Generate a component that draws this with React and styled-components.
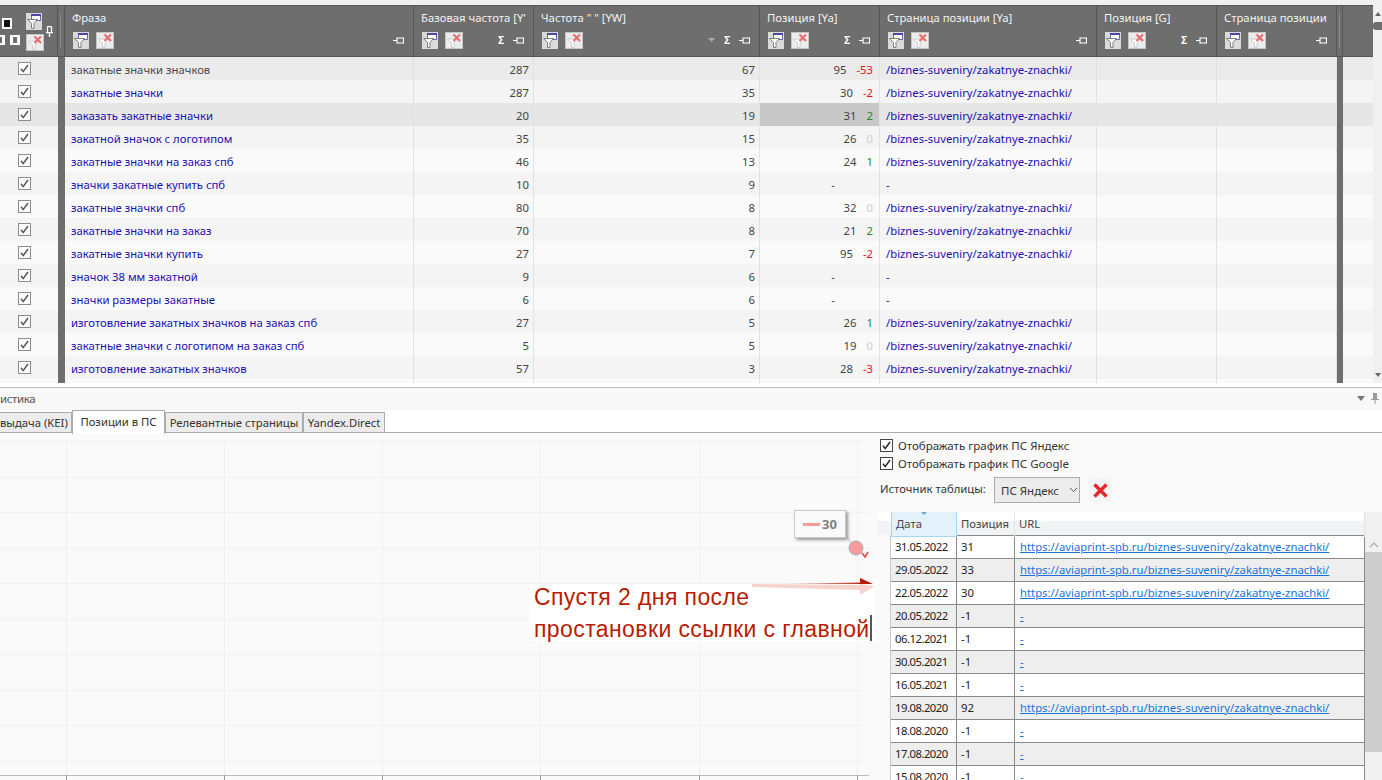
import styled, { createGlobalStyle } from "styled-components";

const GlobalStyle = createGlobalStyle`
  html, body {
    margin: 0;
    padding: 0;
    height: 100%;
    overflow: hidden;
    background: #fff;
    font-family: "Noto Sans", "Open Sans", sans-serif;
    font-size: 11.3px;
  }
`;

const gridColumns = "58px 7px 349px 120px 226px 120px 217px 120px 120px 6px";

const Page = styled.div`
  width: 1382px;
  height: 780px;
  display: flex;
  flex-direction: column;
  overflow: hidden;
`;

const TopPane = styled.div`
  height: 387px;
  display: flex;
  flex: none;
  border-bottom: 1px solid #bcbcbc;
  box-sizing: content-box;
`;

const GridPane = styled.div`
  width: 1373px;
  padding-top: 5px;
  background: #f0f0f0;
`;

const HeaderRow = styled.div`
  display: grid;
  grid-template-columns: ${gridColumns} 30px;
  height: 52px;
  box-sizing: border-box;
  background: #6e6e6e;
  border-top: 1px solid #555;
  border-bottom: 1px solid #555;
  color: #fff;
`;

const HeaderCell = styled.div`
  position: relative;
  border-right: 1px solid #555;
  padding: 4px 0 0 7px;
  white-space: nowrap;
  overflow: hidden;
`;

const HeaderTitle = styled.div`
  height: 16px;
  line-height: 16px;
  color: #f2f2f2;
`;

const HeaderTools = styled.div`
  display: flex;
  align-items: center;
  gap: 7px;
  margin-top: 5px;
  padding-left: 1px;
  height: 18px;
`;

const HeaderRight = styled.div`
  margin-left: auto;
  display: flex;
  align-items: center;
  gap: 9px;
  padding-right: 9px;
  font-size: 10px;
  font-weight: 700;
`;

const SelectCell = styled.div`
  position: relative;
  border-right: 1px solid #555;
`;

const SquareBig = styled.span`
  position: absolute;
  left: 2px;
  top: 12px;
  width: 6px;
  height: 7px;
  border: 2px solid #fff;
  background: #111;
`;

const SquareSmall = styled.span`
  position: absolute;
  left: ${(p) => p.$left}px;
  top: 29px;
  width: 4px;
  height: 6px;
  background: #6e6e6e;
  border-style: solid;
  border-color: #fff;
  border-width: 2px 3px;
`;

const ToolSpot = styled.span`
  position: absolute;
  left: ${(p) => p.$left}px;
  top: ${(p) => p.$top}px;
  display: flex;
`;

const Splitter = styled.div`
  position: relative;
  border-right: 1px solid #555;
  &::after {
    content: "";
    position: absolute;
    left: 2px;
    top: 8px;
    bottom: 8px;
    width: 1px;
    background: #8a8a8a;
  }
`;

const RowsWrap = styled.div`
  height: 330px;
  background: #fff;
  overflow: hidden;
`;

const Row = styled.div`
  display: grid;
  grid-template-columns: ${gridColumns};
  height: ${(p) => (p.$stub ? 4 : 23)}px;
  line-height: 25px;
  background: ${(p) => (p.$selected ? "#e6e6e6" : p.$odd ? "#f4f4f4" : "#fafafa")};
  ${(p) => p.$first && "background: #ebebeb;"}
`;

const CheckCell = styled.div`
  display: flex;
  align-items: center;
  justify-content: center;
  padding-right: 10px;
  box-sizing: border-box;
`;

const Check = styled.span`
  width: 11px;
  height: 11px;
  border: 1px solid #8c8c8c;
  background: #fdfdfd;
  display: flex;
  align-items: center;
  justify-content: center;
`;

const Bar = styled.div`
  background: #6e6e6e;
`;

const Cell = styled.div`
  border-right: 1px solid #e2e2e2;
  padding: 0 4px 0 6px;
  white-space: nowrap;
  overflow: hidden;
  color: ${(p) => p.$color || "#444"};
  text-align: ${(p) => (p.$right ? "right" : "left")};
  ${(p) => p.$active && "background: #c8c8c8;"}
`;

const PositionCell = styled(Cell)`
  display: flex;
  justify-content: flex-end;
  gap: 10px;
  padding-right: 6px;
`;

const Delta = styled.span`
  color: ${(p) => p.$color};
  ${(p) => p.$blank && "width: 28px;"}
`;

const BottomPane = styled.div`
  flex: 1;
  display: flex;
  flex-direction: column;
  min-height: 0;
`;

const TitleBar = styled.div`
  height: 22px;
  flex: none;
  box-sizing: border-box;
  padding: 0 3px 2px 0;
  background: #f8f8f8;
  display: flex;
  align-items: center;
  justify-content: space-between;
  color: #555;
  font-size: 11.5px;
  letter-spacing: -0.4px;
`;

const TitleTools = styled.div`
  display: flex;
  align-items: center;
  gap: 6px;
`;

const TabStrip = styled.div`
  height: 23px;
  flex: none;
  display: flex;
  align-items: flex-end;
  box-sizing: border-box;
  border-bottom: 1px solid #acacac;
  background: #fff;
`;

const Tab = styled.div`
  width: ${(p) => p.$width}px;
  height: 20px;
  line-height: 20px;
  box-sizing: border-box;
  background: #ececec;
  border: 1px solid #acacac;
  border-bottom: none;
  color: #333;
  text-align: center;
  white-space: nowrap;
  ${(p) => p.$clipped && "border-left: none; text-align: right; padding-right: 4px;"}
`;

const ActiveTab = styled(Tab)`
  height: 24px;
  line-height: 22px;
  margin-bottom: -2px;
  background: #fff;
  position: relative;
`;

const Body = styled.div`
  flex: 1;
  display: flex;
  min-height: 0;
  background: #fafafa;
`;

const ChartArea = styled.div`
  position: relative;
  width: 878px;
  flex: none;
`;

const Note = styled.div`
  position: absolute;
  left: 529px;
  top: 151px;
  width: 346px;
  height: 57px;
  padding-left: 5px;
  display: flex;
  flex-direction: column;
  justify-content: center;
  background: #fff;
  color: #b81c00;
  font-family: "Liberation Sans", Arial, sans-serif;
  font-size: 23px;
  line-height: 32px;
  letter-spacing: 0.4px;
  white-space: nowrap;
  box-sizing: border-box;
`;

const NoteLine = styled.span`
  flex: none;
`;

const Caret = styled.span`
  position: absolute;
  left: 341px;
  top: 31px;
  width: 2px;
  height: 26px;
  background: #555;
`;

const NoteArrow = styled.svg`
  position: absolute;
  left: 750px;
  top: 143px;
`;

const Tip = styled.div`
  position: absolute;
  left: 794px;
  top: 77px;
  width: 52px;
  height: 28px;
  box-sizing: border-box;
  display: flex;
  align-items: center;
  gap: 2px;
  padding-left: 8px;
  background: #fafafa;
  border: 1px solid #cacaca;
  box-shadow: 2px 2px 3px #999;
  color: #808080;
  font-size: 13px;
  font-weight: 700;
`;

const TipDash = styled.span`
  width: 17px;
  height: 3px;
  background: #f79a9a;
`;

const Side = styled.div`
  flex: 1;
  min-width: 0;
  display: flex;
  flex-direction: column;
  padding-top: 3px;
`;

const Controls = styled.div`
  padding-left: 2px;
  color: #333;
  font-size: 11.5px;
`;

const OptionRow = styled.label`
  display: flex;
  align-items: center;
  gap: 5px;
  height: 18px;
`;

const OptionBox = styled.span`
  width: 11px;
  height: 11px;
  border: 1px solid #444;
  background: #fff;
  display: flex;
  align-items: center;
  justify-content: center;
`;

const SourceRow = styled.div`
  display: flex;
  align-items: center;
  height: 26px;
  margin-top: 5px;
  white-space: nowrap;
`;

const SourceLabel = styled.span`
  width: 114px;
  font-size: 11.3px;
  margin-bottom: 3px;
`;

const Select = styled.div`
  width: 86px;
  height: 26px;
  box-sizing: border-box;
  border: 1px solid #acacac;
  background: #ececec;
  display: flex;
  align-items: center;
  gap: 10px;
  padding-left: 6px;
`;

const ClearButton = styled.div`
  width: 22px;
  height: 24px;
  margin-left: 9px;
  background: #f5f5f5;
  border-radius: 2px;
  display: flex;
  align-items: center;
  justify-content: center;
`;

const TableWrap = styled.div`
  display: flex;
  margin-top: 9px;
  flex: 1;
  min-height: 0;
`;

const Table = styled.div`
  flex: 1;
  min-width: 0;
  overflow: hidden;
  background: #fff;
`;

const TableHead = styled.div`
  display: grid;
  grid-template-columns: 13px 66px 58px 1fr;
  height: 23px;
  line-height: 24px;
  background: linear-gradient(#fff 0 9px, #f2f3f4 9px);
  color: #444;
  font-size: 11.3px;
`;

const HeadCell = styled.div`
  position: relative;
  padding-left: 4px;
  border-right: 1px solid #e4e4e4;
  ${(p) => p.$sorted && "background: #e3f1fb; border: 1px solid #a6d8f5; border-top: none; box-sizing: border-box;"}
`;

const SortMark = styled.span`
  position: absolute;
  left: 28px;
  top: -1px;
  width: 0;
  height: 0;
  border-left: 4px solid transparent;
  border-right: 4px solid transparent;
  border-top: 4px solid #7aa3c4;
`;

const DataRow = styled.div`
  display: grid;
  grid-template-columns: 13px 66px 58px 1fr;
  height: 23px;
  line-height: 22px;
  color: #222;
  font-size: 11.3px;
  background: ${(p) => (p.$shade ? "#eee" : "#fff")};
`;

const Gutter = styled.div`
  background: #fafafa;
  border-right: 1px solid #c8c8c8;
`;

const DataCell = styled.div`
  padding-left: 4px;
  border-top: 1px solid #8a8a8a;
  border-right: 1px solid #8a8a8a;
  white-space: nowrap;
`;

const DateCell = styled(DataCell)`
  letter-spacing: -0.5px;
`;

const UrlCell = styled(DataCell)`
  padding-left: 5px;
`;

const UrlLink = styled.a`
  color: #1a73d9;
  text-decoration: underline;
`;

const TableScroll = styled.div`
  width: 17px;
  flex: none;
  background: #f0f0f0;
  display: flex;
  flex-direction: column;
`;

const ScrollTop = styled.div`
  height: 40px;
  display: flex;
  align-items: flex-end;
  justify-content: center;
  padding-bottom: 4px;
  box-sizing: border-box;
`;

const ScrollThumb = styled.div`
  height: 200px;
  background: #cdcdcd;
`;

const GridScroll = styled.div`
  width: 9px;
  flex: none;
  margin-bottom: 4px;
  background: #f0f0f0;
  position: relative;
`;

const GridThumb = styled.span`
  position: absolute;
  left: 0;
  right: 0;
  top: 22px;
  height: 8px;
  border-radius: 3px 0 0 3px;
  background: #6e6e6e;
`;

const GridArrow = styled.span`
  position: absolute;
  right: 1px;
  top: ${(p) => p.$top}px;
  width: 0;
  height: 0;
  border-left: 3px solid transparent;
  border-right: 3px solid transparent;
  ${(p) => (p.$up ? "border-bottom: 4px solid #666;" : "border-top: 4px solid #666;")}
`;

const FilterIcon = () => (
  <svg width="16" height="17" viewBox="0 0 16 17">
    <rect width="16" height="17" fill="#dadada" />
    <rect x="5.5" y="1.5" width="9" height="6" fill="#fff" stroke="#4a45a8" strokeWidth="0.8" />
    <rect x="5" y="1" width="10" height="2" fill="#4a45a8" />
    <path d="M1.5 6.5h10L8 10.5v5H5.5v-5z" fill="#fafafa" stroke="#666" strokeWidth="0.8" />
  </svg>
);

const ClearFilterIcon = () => (
  <svg width="18" height="17" viewBox="0 0 18 17">
    <rect x="0.5" y="0.5" width="17" height="16" fill="#ececec" stroke="#c4c4c4" />
    <path d="M2.5 7h10L9 11v4.5H6.5V11z" fill="#fff" stroke="#c4c4c4" strokeWidth="0.8" />
    <path d="M8.5 2.5l6.5 6.5M15 2.5L8.5 9" stroke="#e86a6a" strokeWidth="2" />
  </svg>
);

const PinIcon = () => (
  <svg width="11" height="7" viewBox="0 0 11 7">
    <path d="M0 3.5h3.5M4 1h6.5v5H4z" fill="none" stroke="#fff" strokeWidth="1.2" />
  </svg>
);

const PinUpIcon = () => (
  <svg width="7" height="11" viewBox="0 0 7 11">
    <path d="M1.5 0.6v6M5.5 0.6v6M0 6.6h7M1.5 0.6h4M3.5 7v4" fill="none" stroke="#fff" strokeWidth="1.3" />
  </svg>
);

const TickIcon = ({ size = 9, color = "#555" }) => (
  <svg width={size} height={size} viewBox="0 0 9 9">
    <path d="M1 4.8l2.2 2.8L8 1" fill="none" stroke={color} strokeWidth="1.5" />
  </svg>
);

const ChevronIcon = () => (
  <svg width="9" height="6" viewBox="0 0 9 6">
    <path d="M1 1l3.5 3.5L8 1" fill="none" stroke="#555" strokeWidth="1" />
  </svg>
);

const CrossIcon = () => (
  <svg width="15" height="15" viewBox="0 0 15 15">
    <path d="M1.5 1.5l12 12M13.5 1.5l-12 12" stroke="#e8262a" strokeWidth="3.4" />
  </svg>
);

const columns = [
  { title: "Фраза", pin: true },
  { title: "Базовая частота [Y'", sum: true, pin: true },
  { title: 'Частота " " [YW]', sort: true, sum: true, pin: true },
  { title: "Позиция [Ya]", sum: true, pin: true },
  { title: "Страница позиции [Ya]", pin: true },
  { title: "Позиция [G]", sum: true, pin: true },
  { title: "Страница позиции", pin: true },
];

const path = "/biznes-suveniry/zakatnye-znachki/";
const rows = [
  ["закатные значки значков", 287, 67, 95, -53, path],
  ["закатные значки", 287, 35, 30, -2, path],
  ["заказать закатные значки", 20, 19, 31, 2, path],
  ["закатной значок с логотипом", 35, 15, 26, 0, path],
  ["закатные значки на заказ спб", 46, 13, 24, 1, path],
  ["значки закатные купить спб", 10, 9, "-", null, "-"],
  ["закатные значки спб", 80, 8, 32, 0, path],
  ["закатные значки на заказ", 70, 8, 21, 2, path],
  ["закатные значки купить", 27, 7, 95, -2, path],
  ["значок 38 мм закатной", 9, 6, "-", null, "-"],
  ["значки размеры закатные", 6, 6, "-", null, "-"],
  ["изготовление закатных значков на заказ спб", 27, 5, 26, 1, path],
  ["закатные значки с логотипом на заказ спб", 5, 5, 19, 0, path],
  ["изготовление закатных значков", 57, 3, 28, -3, path],
];

const fullUrl = "https://aviaprint-spb.ru/biznes-suveniry/zakatnye-znachki/";
const history = [
  ["31.05.2022", "31", fullUrl],
  ["29.05.2022", "33", fullUrl],
  ["22.05.2022", "30", fullUrl],
  ["20.05.2022", "-1", "-"],
  ["06.12.2021", "-1", "-"],
  ["30.05.2021", "-1", "-"],
  ["16.05.2021", "-1", "-"],
  ["19.08.2020", "92", fullUrl],
  ["18.08.2020", "-1", "-"],
  ["17.08.2020", "-1", "-"],
  ["15.08.2020", "-1", "-"],
];

const deltaColor = (d) => {
  if (d === 0) return "#cfcfcf";
  return d > 0 ? "#1f8a2a" : "#f01010";
};

const gridYs = [441, 477, 512, 548, 583, 619, 654, 690, 725, 761];
const gridXs = [66, 224, 382, 540, 699, 857];

function Chart() {
  return (
    <svg width="878" height="347" viewBox="0 433 878 347" style={{ display: "block" }}>
      {gridYs.map((y) => (
        <line key={y} x1="0" x2="869" y1={y + 0.5} y2={y + 0.5} stroke="#f0f0f0" />
      ))}
      {gridXs.map((x) => (
        <line key={x} x1={x + 0.5} x2={x + 0.5} y1="441" y2="775" stroke="#f8efe6" />
      ))}
      <line x1="0" x2="869" y1="775.5" y2="775.5" stroke="#bdbdbd" />
      {gridXs.map((x) => (
        <line key={x} x1={x + 0.5} x2={x + 0.5} y1="775" y2="780" stroke="#9a9a9a" />
      ))}
      <line x1="846" y1="536" x2="855" y2="548" stroke="#bdbdbd" />
      <circle cx="856" cy="548" r="7" fill="#f79a9a" stroke="#9fb0c8" />
      <path d="M862 553l3 4 3-5" fill="none" stroke="#f04a4a" strokeWidth="1.7" />
    </svg>
  );
}

function App() {
  return (
    <Page>
      <GlobalStyle />
      <TopPane>
        <GridPane>
          <HeaderRow>
            <SelectCell>
              <SquareBig />
              <SquareSmall $left={-5} />
              <SquareSmall $left={10} />
              <ToolSpot $left={26} $top={7}>
                <FilterIcon />
              </ToolSpot>
              <ToolSpot $left={26} $top={28}>
                <ClearFilterIcon />
              </ToolSpot>
              <ToolSpot $left={46} $top={20}>
                <PinUpIcon />
              </ToolSpot>
            </SelectCell>
            <Splitter />
            {columns.map((col) => (
              <HeaderCell key={col.title}>
                <HeaderTitle>{col.title}</HeaderTitle>
                <HeaderTools>
                  <FilterIcon />
                  <ClearFilterIcon />
                  <HeaderRight>
                    {col.sort && (
                      <svg width="7" height="4" viewBox="0 0 7 4">
                        <path d="M0 0h7L3.5 4z" fill="#aaa" />
                      </svg>
                    )}
                    {col.sum && <span>Σ</span>}
                    {col.pin && <PinIcon />}
                  </HeaderRight>
                </HeaderTools>
              </HeaderCell>
            ))}
            <Splitter />
            <div />
          </HeaderRow>
          <RowsWrap>
            {rows.map((r, i) => (
              <Row key={r[0]} $odd={i % 2 === 1} $selected={i === 2} $first={i === 0}>
                <CheckCell>
                  <Check>
                    <TickIcon />
                  </Check>
                </CheckCell>
                <Bar />
                <Cell $color={i === 0 ? "#4a4a4a" : "#1c0fb0"}>{r[0]}</Cell>
                <Cell $right>{r[1]}</Cell>
                <Cell $right>{r[2]}</Cell>
                <PositionCell $active={i === 2}>
                  <span>{r[3]}</span>
                  <Delta $color={deltaColor(r[4])} $blank={r[4] === null}>
                    {r[4]}
                  </Delta>
                </PositionCell>
                <Cell $color="#1c0fb0">{r[5]}</Cell>
                <Cell />
                <Cell />
                <Bar />
              </Row>
            ))}
            <Row $stub>
              <div />
              <Bar />
              <Cell />
              <Cell />
              <Cell />
              <Cell />
              <Cell />
              <Cell />
              <Cell />
              <Bar />
            </Row>
          </RowsWrap>
        </GridPane>
        <GridScroll>
          <GridArrow $up $top={12} />
          <GridThumb />
          <GridArrow $top={373} />
        </GridScroll>
      </TopPane>
      <BottomPane>
        <TitleBar>
          <span>истика</span>
          <TitleTools>
            <svg width="8" height="5" viewBox="0 0 8 5">
              <path d="M0 0h8L4 5z" fill="#777" />
            </svg>
            <svg width="8" height="11" viewBox="0 0 8 11">
              <path d="M2 0h4v6h2v1H4.5v4h-1V7H0V6h2z" fill="#999" />
            </svg>
          </TitleTools>
        </TitleBar>
        <TabStrip>
          <Tab $clipped $width={72}>выдача (KEI)</Tab>
          <ActiveTab $width={93}>Позиции в ПС</ActiveTab>
          <Tab $width={138}>Релевантные страницы</Tab>
          <Tab $width={82}>Yandex.Direct</Tab>
        </TabStrip>
        <Body>
          <ChartArea>
            <Chart />
            <Tip>
              <TipDash />
              30
            </Tip>
            <Note>
              <NoteLine>Спустя 2 дня после</NoteLine>
              <NoteLine>простановки ссылки с главной</NoteLine>
              <Caret />
            </Note>
            <NoteArrow width="128" height="22" viewBox="750 576 128 22">
              <defs>
                <linearGradient id="shaft" x1="0" x2="1" y1="0" y2="0">
                  <stop offset="0" stopColor="#b81c00" stopOpacity="0.05" />
                  <stop offset="1" stopColor="#b81c00" stopOpacity="0.9" />
                </linearGradient>
              </defs>
              <path d="M752 584L860 585V584L875 586L860 595V590L752 587Z" fill="#f6d4cd" />
              <path d="M780 584L860 582.5V584H780Z" fill="url(#shaft)" />
              <path d="M860 584V578L873 584Z" fill="#b81c00" />
            </NoteArrow>
          </ChartArea>
          <Side>
            <Controls>
              <OptionRow>
                <OptionBox>
                  <TickIcon color="#222" />
                </OptionBox>
                Отображать график ПС Яндекс
              </OptionRow>
              <OptionRow>
                <OptionBox>
                  <TickIcon color="#222" />
                </OptionBox>
                Отображать график ПС Google
              </OptionRow>
              <SourceRow>
                <SourceLabel>Источник таблицы:</SourceLabel>
                <Select>
                  ПС Яндекс
                  <ChevronIcon />
                </Select>
                <ClearButton>
                  <CrossIcon />
                </ClearButton>
              </SourceRow>
            </Controls>
            <TableWrap>
              <Table>
                <TableHead>
                  <div />
                  <HeadCell $sorted>
                    <SortMark />
                    Дата
                  </HeadCell>
                  <HeadCell>Позиция</HeadCell>
                  <HeadCell>URL</HeadCell>
                </TableHead>
                {history.map((h, i) => (
                  <DataRow key={h[0]} $shade={i % 2 === 1}>
                    <Gutter />
                    <DateCell>{h[0]}</DateCell>
                    <DataCell>{h[1]}</DataCell>
                    <UrlCell>
                      <UrlLink href="#">{h[2]}</UrlLink>
                    </UrlCell>
                  </DataRow>
                ))}
              </Table>
              <TableScroll>
                <ScrollTop>
                  <svg width="10" height="6" viewBox="0 0 10 6">
                    <path d="M1 5l4-4 4 4" fill="none" stroke="#aaa" strokeWidth="1.2" />
                  </svg>
                </ScrollTop>
                <ScrollThumb />
              </TableScroll>
            </TableWrap>
          </Side>
        </Body>
      </BottomPane>
    </Page>
  );
}

export default App;
